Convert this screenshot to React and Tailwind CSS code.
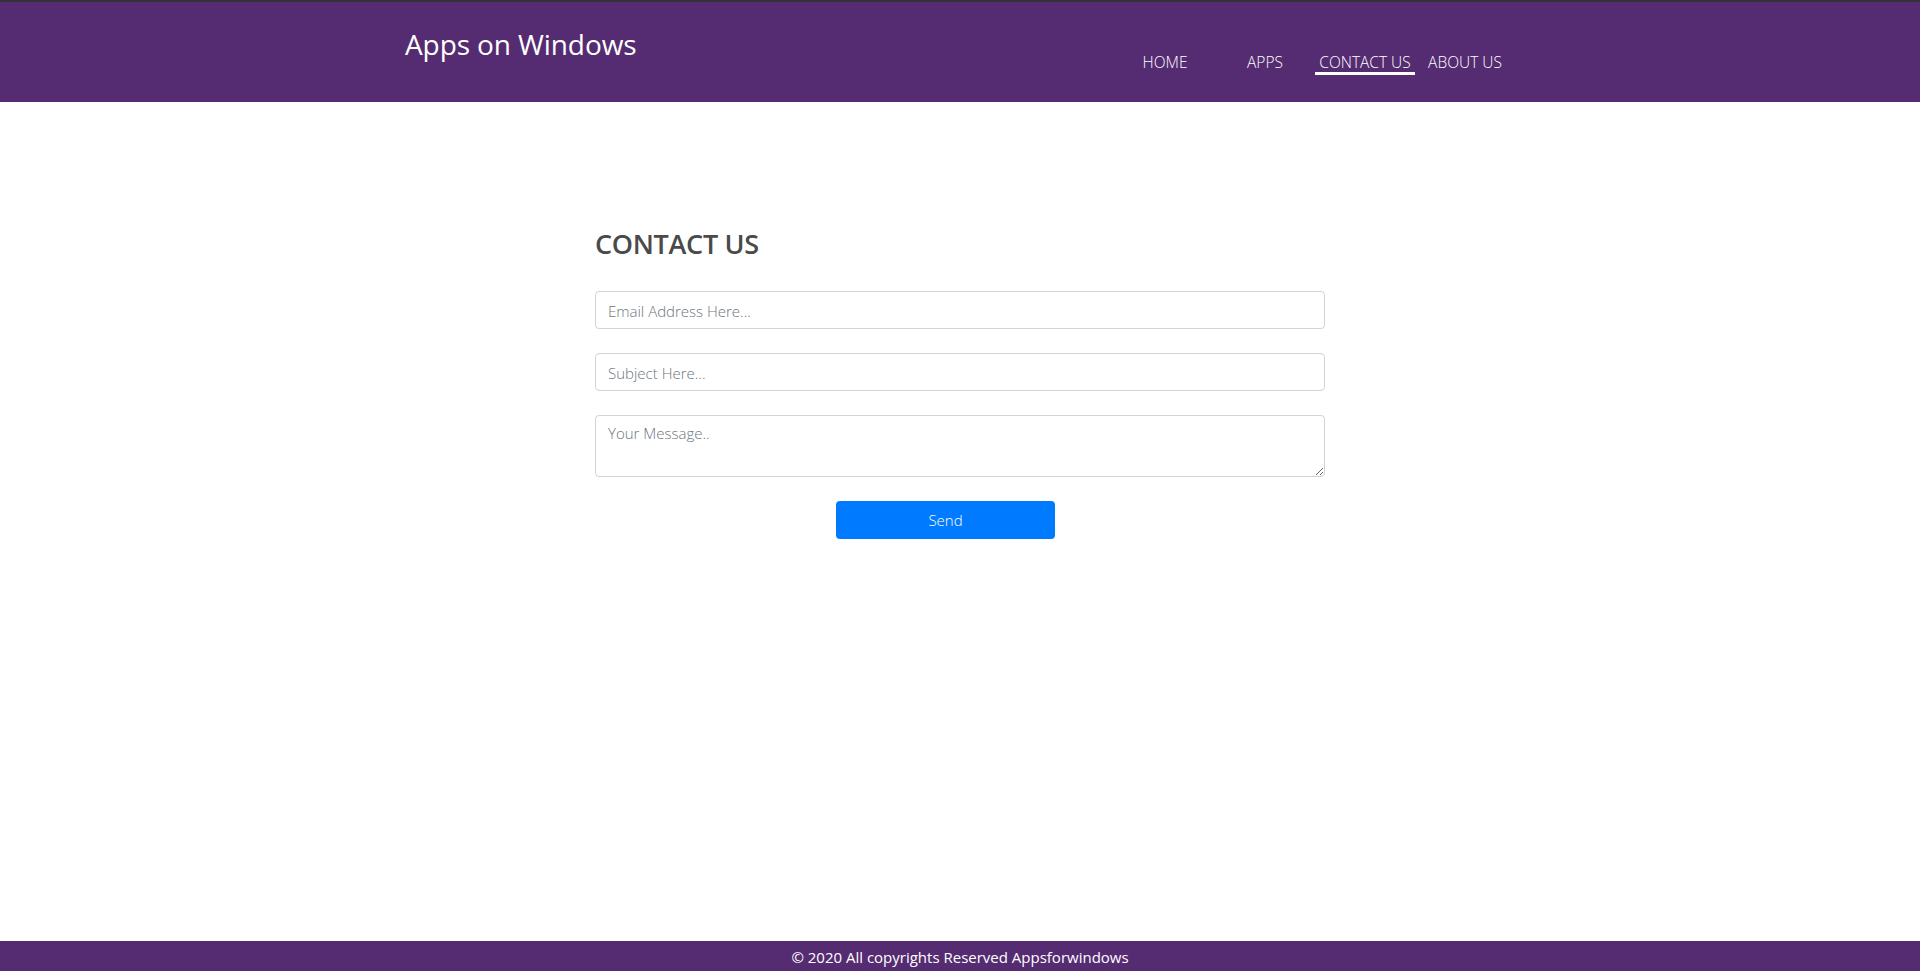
import React from 'react'

const navItems = ['HOME', 'APPS', 'CONTACT US', 'ABOUT US']

function Header() {
  return (
    <header className="bg-[#552c71] border-t-2 border-[#333]">
      <div className="w-[1140px] mx-auto px-[15px] h-[100px] flex justify-between">
        <a href="#" className="mt-[24px] text-[28px] leading-[36px] text-white font-medium tracking-[-0.1px]">
          Apps on Windows
        </a>
        <ul className="flex items-start pt-[50px]">
          {navItems.map(item => (
            <li key={item} className="w-[100px] text-center">
              <a
                href="#"
                className={
                  'block text-[15.5px] leading-[20px] text-white font-light ' +
                  (item === 'CONTACT US' ? 'border-b-[3px] border-white' : '')
                }
              >
                {item}
              </a>
            </li>
          ))}
        </ul>
      </div>
    </header>
  )
}

function ContactForm() {
  return (
    <section className="w-[730px] mx-auto pt-[124px]">
      <h2 className="text-[27px] leading-[36px] font-semibold text-[#4a4a4a] tracking-[-0.3px]">CONTACT US</h2>
      <form className="mt-[29px] flex flex-col" onSubmit={e => e.preventDefault()}>
        <input
          type="email"
          placeholder="Email Address Here..."
          className="h-[38px] w-full border border-[#ced4da] rounded-[4px] px-[12px] pt-[2px] text-[15px] font-light text-[#495057] placeholder:text-[#6c757d] outline-none"
        />
        <input
          type="text"
          placeholder="Subject Here..."
          className="mt-[24px] h-[38px] w-full border border-[#ced4da] rounded-[4px] px-[12px] pt-[2px] text-[15px] font-light text-[#495057] placeholder:text-[#6c757d] outline-none"
        />
        <textarea
          placeholder="Your Message.."
          className="mt-[24px] h-[62px] w-full border border-[#ced4da] rounded-[4px] px-[12px] py-[6px] text-[15px] font-light text-[#495057] placeholder:text-[#6c757d] outline-none"
        />
        <button
          type="submit"
          className="mt-[24px] ml-[241px] w-[219px] h-[38px] bg-[#007bff] text-white rounded-[4px] text-[15px] font-light"
        >
          Send
        </button>
      </form>
    </section>
  )
}

export default function App() {
  return (
    <div className="min-h-screen flex flex-col bg-white font-['Open_Sans',sans-serif]">
      <Header />
      <main className="flex-1">
        <ContactForm />
      </main>
      <footer className="bg-[#552c71] h-[30px] pt-[3px] flex items-center justify-center text-white text-[15px]">
        © 2020 All copyrights Reserved Appsforwindows
      </footer>
    </div>
  )
}
